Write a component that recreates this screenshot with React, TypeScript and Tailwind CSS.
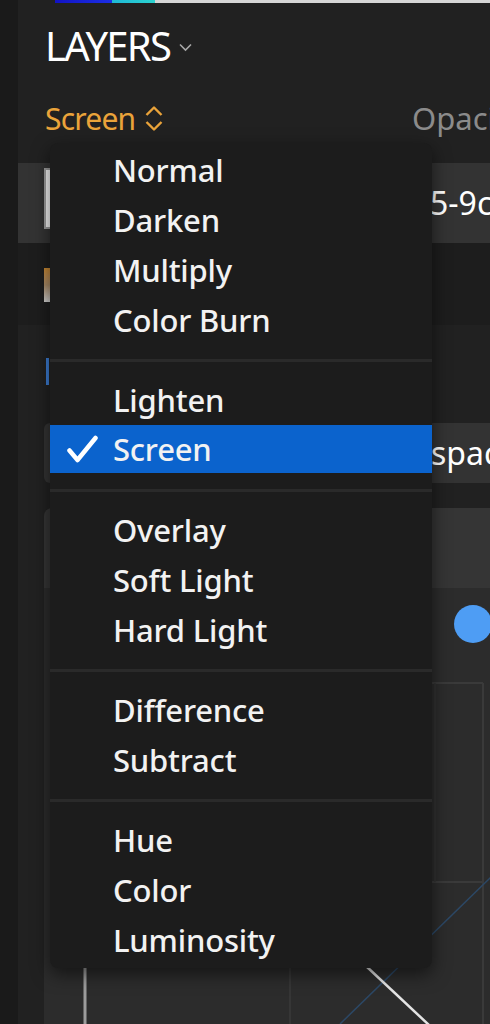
import React from "react";

const groups: string[][] = [
  ["Normal", "Darken", "Multiply", "Color Burn"],
  ["Lighten", "Screen"],
  ["Overlay", "Soft Light", "Hard Light"],
  ["Difference", "Subtract"],
  ["Hue", "Color", "Luminosity"],
];

function MenuRow({ label, selected }: { label: string; selected?: boolean }) {
  return (
    <div className="relative flex h-[50px] items-start">
      <div
        className={
          selected
            ? "flex h-[48px] w-full items-center bg-[#0b63cd]"
            : "flex h-[50px] w-full items-center"
        }
      >
        <div className="flex w-[63px] shrink-0 justify-start pl-[17px]">
          {selected ? (
            <svg width="31" height="28" viewBox="0 0 31 28" fill="none">
              <path
                d="M2.5 15.5 L10.5 25 L28.5 3"
                stroke="#ffffff"
                strokeWidth="4.5"
                strokeLinecap="round"
                strokeLinejoin="round"
              />
            </svg>
          ) : null}
        </div>
        <span className="whitespace-nowrap text-[31px] font-medium leading-none tracking-[-0.2px] text-[#f2f2f2]">
          {label}
        </span>
      </div>
    </div>
  );
}

export default function App() {
  return (
    <div className="relative flex h-[1024px] w-[490px] overflow-hidden bg-[#1a1a1a] font-['Noto_Sans','Open_Sans',sans-serif]">
      <div className="w-[18px] shrink-0 bg-[#1a1a1a]" />
      <div className="flex min-w-0 flex-1 flex-col overflow-hidden bg-[#212121]">
        {/* gradient strip */}
        <div className="flex h-[3px] shrink-0 pl-[37px]">
          <div className="w-[57px] bg-gradient-to-r from-[#1212c4] to-[#1c2ee6]" />
          <div className="w-[43px] bg-gradient-to-r from-[#1fb8d6] to-[#2cd3cf]" />
          <div className="flex-1 bg-[#d6d6d6]" />
        </div>

        {/* header */}
        <div className="h-[160px] shrink-0 pl-[27px]">
          <div className="flex items-center pt-[23px]">
            <span className="text-[40px] leading-none tracking-[-1.8px] text-white">LAYERS</span>
            <svg className="ml-[9px] mt-[2px]" width="13" height="9" viewBox="0 0 13 9" fill="none">
              <path d="M1 1.5 L6.5 7 L12 1.5" stroke="#a8a8a8" strokeWidth="1.6" />
            </svg>
          </div>
          <div className="mt-[37px] flex items-center">
            <div className="flex w-[367px] shrink-0 items-center">
              <span className="text-[30px] leading-none tracking-[-0.8px] text-[#eaa33a]">Screen</span>
              <svg className="ml-[9px]" width="20" height="27" viewBox="0 0 20 27" fill="none">
                <path d="M2.5 10 L10 2.5 L17.5 10" stroke="#eaa33a" strokeWidth="2.4" strokeLinejoin="round" />
                <path d="M2.5 17 L10 24.5 L17.5 17" stroke="#eaa33a" strokeWidth="2.4" strokeLinejoin="round" />
              </svg>
            </div>
            <span className="whitespace-nowrap text-[31px] leading-none text-[#8b8b8b]">Opacity</span>
          </div>
        </div>

        {/* layer row 1 (selected) */}
        <div className="flex h-[80px] shrink-0 bg-[#333333] pl-[26px]">
          <div className="mt-[5px] h-[61px] w-[56px] shrink-0 border-2 border-[#9a9a9a] bg-[#f4f4f4]" />
          <span className="ml-[330px] self-center whitespace-nowrap text-[32px] leading-none text-white">
            5-9cd7e1
          </span>
        </div>

        {/* layer row 2 */}
        <div className="flex h-[82px] shrink-0 bg-[#1d1d1d] pl-[26px]">
          <div className="mt-[25px] h-[34px] w-[40px] shrink-0 bg-gradient-to-b from-[#c4852f] via-[#a88a66] to-[#cfcfcf]" />
        </div>

        {/* properties */}
        <div className="flex min-h-0 flex-1 flex-col pl-[26px]">
          <div className="ml-[2px] mt-[33px] h-[27px] w-[3px] shrink-0 bg-[#3b7bd0]" />
          <div className="mt-[38px] flex h-[60px] shrink-0 items-center rounded-l-md bg-[#333333] pl-[387px]">
            <span className="whitespace-nowrap text-[32px] leading-none text-white">space</span>
          </div>
          <div className="mt-[25px] flex min-h-0 flex-1 flex-col overflow-hidden rounded-tl-lg">
            <div className="h-[80px] shrink-0 bg-[#353535]" />
            <div className="flex-1 bg-[#2c2c2c]">
              <svg width="446" height="436" viewBox="0 0 446 436" fill="none">
                <circle cx="429" cy="36" r="19" fill="#4e9df4" />
                <line x1="41" y1="95" x2="439" y2="95" stroke="#3a3a3a" strokeWidth="2" />
                <line x1="246" y1="95" x2="246" y2="436" stroke="#363636" strokeWidth="2" />
                <line x1="41" y1="294" x2="439" y2="294" stroke="#3a3a3a" strokeWidth="2" />
                <line x1="391" y1="95" x2="391" y2="294" stroke="#333333" strokeWidth="1.5" />
                <line x1="439" y1="95" x2="439" y2="436" stroke="#3a3a3a" strokeWidth="2" />
                <line x1="41" y1="95" x2="41" y2="436" stroke="#9c9c9c" strokeWidth="3" />
                <line x1="296" y1="436" x2="448" y2="288" stroke="#2c4866" strokeWidth="1.5" />
                <line x1="322" y1="378" x2="386" y2="438" stroke="#e4e4e4" strokeWidth="2.5" />
              </svg>
            </div>
          </div>
        </div>
      </div>

      {/* blend mode menu */}
      <div className="absolute left-[50px] top-[143px] w-[382px] rounded-lg bg-[#1c1c1c] pb-[3px] pt-[2px] shadow-[0_6px_18px_rgba(0,0,0,0.55)]">
        {groups.map((g, gi) => (
          <div key={gi}>
            {gi > 0 ? (
              <div className="flex h-[30px] items-center">
                <div className="h-[3px] w-full bg-[#2a2a2a]" />
              </div>
            ) : null}
            {g.map((label) => (
              <MenuRow key={label} label={label} selected={label === "Screen"} />
            ))}
          </div>
        ))}
      </div>
    </div>
  );
}
